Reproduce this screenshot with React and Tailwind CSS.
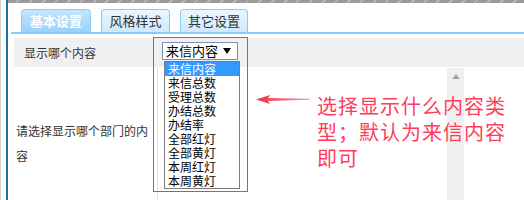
import React from "react";

const items = [
  "来信内容",
  "来信总数",
  "受理总数",
  "办结总数",
  "办结率",
  "全部红灯",
  "全部黄灯",
  "本周红灯",
  "本周黄灯",
];

export default function App() {
  return (
    <div className="relative flex w-[524px] h-[200px] overflow-hidden bg-white font-['Noto_Sans_CJK_SC',sans-serif] text-[#333]">
      {/* left edge */}
      <div className="w-[6px] border-l border-[#d0d0d0]" />

      <div className="flex-1 flex flex-col border-l-2 border-[#1f6fab]">
        {/* top stripe */}
        <div className="h-[3px] bg-[repeating-linear-gradient(135deg,#9a9a9a_0px,#9a9a9a_7px,#b4b4b4_7px,#b4b4b4_9px)]" />

        {/* Tabs */}
        <div className="flex gap-[10px] pl-[13px] pt-[6px]">
          <div className="w-[70px] h-[23px] rounded-t-[4px] border border-b-0 border-[#8ccaf3] bg-[linear-gradient(#c4e6fd,#9ad2f9)] flex items-center justify-center text-[13px] font-bold text-white">
            基本设置
          </div>
          <div className="w-[69px] h-[23px] rounded-t-[4px] border border-b-0 border-[#8ccaf3] bg-[linear-gradient(#eaf6fe,#cfeafc)] flex items-center justify-center text-[13px]">
            风格样式
          </div>
          <div className="w-[68px] h-[23px] rounded-t-[4px] border border-b-0 border-[#8ccaf3] bg-[linear-gradient(#eaf6fe,#cfeafc)] flex items-center justify-center text-[13px]">
            其它设置
          </div>
        </div>
        <div className="h-[2px] ml-[3px] bg-[#87cefa]" />

        {/* Row 1 */}
        <div className="ml-[6px] mt-[4px] h-[29px] bg-[#f0f0f0] flex items-center">
          <div className="w-[148px] pl-[10px] text-[12px]">显示哪个内容</div>
          <div className="w-[76px] h-[18px] -mt-[3px] border border-[#7f8fb0] bg-white flex items-center justify-between pl-[3px] pr-[6px] text-[13px] text-black">
            <span>来信内容</span>
            <svg width="8" height="6" viewBox="0 0 8 6">
              <polygon points="0,0 8,0 4,6" fill="#000" />
            </svg>
          </div>
        </div>

        {/* Row 2 */}
        <div className="ml-[6px] flex flex-1">
          <div className="w-[144px] border-r border-[#e6e6e6] pl-[2px] pt-[51px] text-[12px] leading-[25px]">
            请选择显示哪个部门的内容
          </div>
          <div className="flex-1" />
        </div>
      </div>

      {/* scrollbar of the next field */}
      <div className="absolute left-[447px] top-[68px] bottom-0 w-[17px] bg-[#f0f0f0] flex justify-center pt-[6px]">
        <svg width="8" height="5" viewBox="0 0 8 5">
          <polygon points="0,5 8,5 4,0" fill="#a3a3a3" />
        </svg>
      </div>

      {/* opened select list */}
      <div className="absolute left-[164px] top-[61px] w-[76px] h-[128px] border border-[#7a7a7a] bg-white text-[12px] leading-[14px] text-black">
        {items.map((it, i) => (
          <div
            key={it}
            className={i === 0 ? "pl-[3px] bg-[#3399ff] text-white" : "pl-[3px]"}
          >
            {it}
          </div>
        ))}
      </div>

      {/* annotation */}
      <div className="absolute left-[153px] top-[37px] w-[95px] h-[155px] border border-[#e64545]" />

      <svg
        className="absolute left-[255px] top-[93px]"
        width="56"
        height="13"
        viewBox="0 0 56 13"
      >
        <defs>
          <linearGradient id="shaft" x1="0" x2="1" y1="0" y2="0">
            <stop offset="0" stopColor="#f04050" stopOpacity="1" />
            <stop offset="1" stopColor="#f04050" stopOpacity="0.55" />
          </linearGradient>
        </defs>
        <polygon points="10,5 55,5.8 55,6.8 10,8" fill="url(#shaft)" />
        <polygon points="1,6.5 15,2 12,6.5 15,11" fill="#f04050" />
      </svg>

      <div className="absolute left-[317px] top-[93px] w-[200px] text-[20px] leading-[26px] tracking-[1px] text-[#ff3d5a]">
        选择显示什么内容类型；默认为来信内容即可
      </div>
    </div>
  );
}
